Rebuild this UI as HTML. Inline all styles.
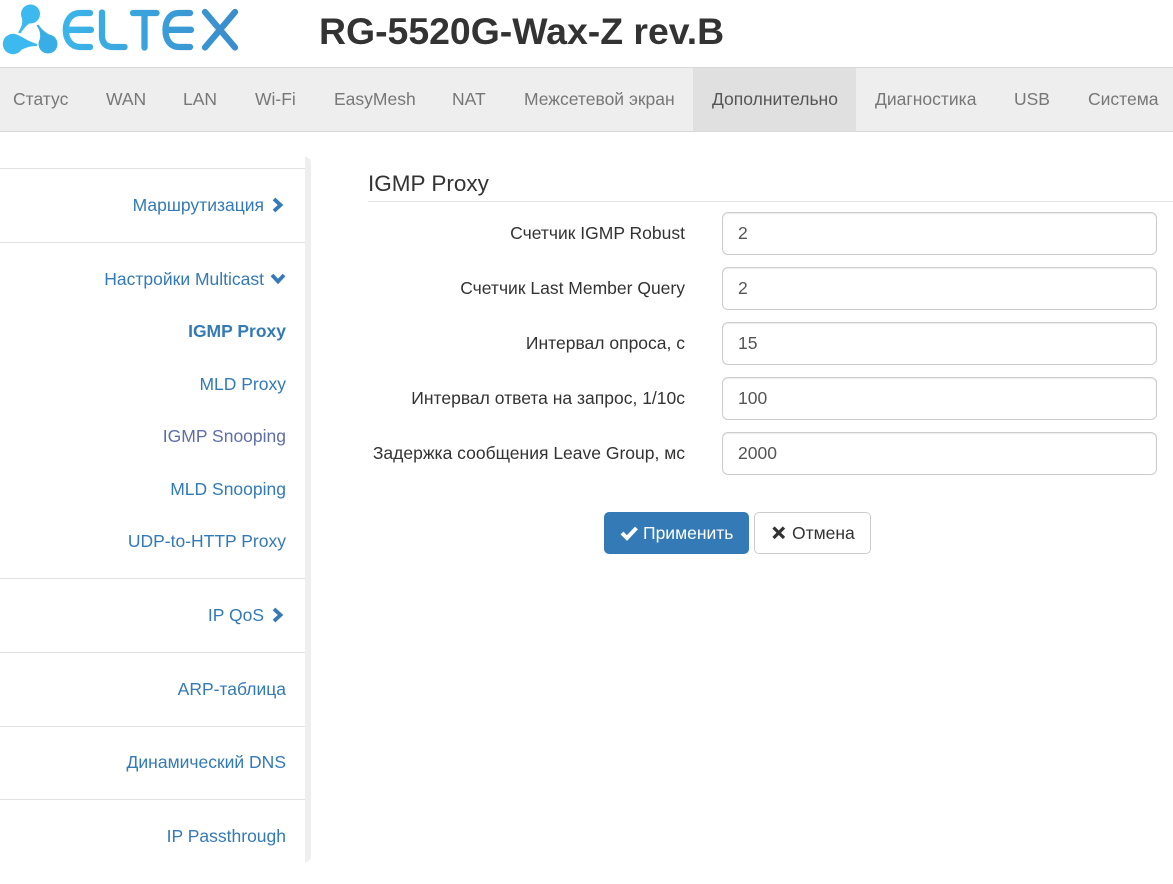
<!DOCTYPE html>
<html lang="ru"><head><meta charset="utf-8"><title>RG-5520G-Wax-Z rev.B</title>
<style>
html,body{margin:0;padding:0;background:#fff}
body{width:1173px;height:884px;position:relative;overflow:hidden;font-family:"Liberation Sans",sans-serif;font-size:17.5px;color:#333}
.a{position:absolute;white-space:nowrap;line-height:24px}
#nav{position:absolute;left:0;top:67px;width:1173px;height:63px;background:#eee;border-top:1px solid #d8d8d8;border-bottom:1px solid #d8d8d8}
#act{position:absolute;left:693px;top:0;width:163px;height:63px;background:#e0e0e0}
.n{top:87px;color:#777}
.s{color:#337ab7;right:887px}
.l{background:#e2e2e2;position:absolute;left:0;width:305px;height:1px}
.lb{right:488px;color:#333}
.in{position:absolute;left:722px;width:433px;height:41px;border:1px solid #ccc;border-radius:6px;box-shadow:inset 0 1px 1px rgba(0,0,0,.075);background:#fff;line-height:40px;text-indent:15px;color:#555}
</style></head><body>
<svg style="position:absolute;left:0;top:0" width="245" height="60" viewBox="0 0 245 60" role="img" aria-label="ELTEX">
<defs><linearGradient id="g" gradientUnits="userSpaceOnUse" x1="60" x2="240" y1="0" y2="0"><stop offset="0" stop-color="#3bb6ea"/><stop offset="1" stop-color="#3a8ccb"/></linearGradient></defs>
<g fill="#3cb9ee">
<circle cx="30.500" cy="14" r="9.500"/><path d="M22 18C23 24 21 28 18 32.500L20.500 33.500C24 28 27 25 30 23Z"/>
<circle cx="13" cy="44" r="10.200"/><path d="M16 34.500C22 36 27 41 37 44L37 46C28 46 22 49 15.500 53.500Z"/>
<circle cx="48" cy="44" r="9.500" fill="#39aee6"/><path d="M39.500 41C41 35 40 30 36.500 25.500L38.500 24.500C42 30 46 33 52 36Z" fill="#39aee6"/>
</g>
<g fill="none" stroke="url(#g)" stroke-width="6.300" stroke-linecap="round" stroke-linejoin="round">
<path d="M90 13H80C71 13 65.800 20.500 65.800 30S71 47 80 47H90M67 29.800H91"/>
<path d="M102 12.500V36C102 43 106 47 113 47H124.500"/>
<path d="M133 13H156.500M144.500 13V47.500"/>
<path d="M190 13H179C170 13 165.500 20.500 165.500 30S170 47 179 47H190M167 29.800H191"/>
<path d="M205 12L235 47.500M235 12L205 47.500"/>
</g></svg>
<div class="a" style="left:319px;top:10px;font-size:37.400px;font-weight:700;line-height:42px;color:#333">RG-5520G-Wax-Z rev.B</div>
<div id="nav"><div id="act"></div></div>
<div class="a n" style="left:13px">Статус</div>
<div class="a n" style="left:106px">WAN</div>
<div class="a n" style="left:183px">LAN</div>
<div class="a n" style="left:255px">Wi-Fi</div>
<div class="a n" style="left:334px">EasyMesh</div>
<div class="a n" style="left:452px">NAT</div>
<div class="a n" style="left:524px">Межсетевой экран</div>
<div class="a n" style="left:712px;color:#555">Дополнительно</div>
<div class="a n" style="left:875px">Диагностика</div>
<div class="a n" style="left:1014px">USB</div>
<div class="a n" style="left:1088px">Система</div>

<div style="position:absolute;left:305px;top:157px;width:6px;height:705px;background:#eee;border-radius:0 7px 7px 0"></div>
<div class="l" style="top:168px"></div><div class="l" style="top:242px"></div><div class="l" style="top:578px"></div><div class="l" style="top:652px"></div><div class="l" style="top:726px"></div><div class="l" style="top:799px"></div>

<div class="a s" style="top:193px;right:909px">Маршрутизация</div>
<svg style="position:absolute;left:271px;top:197px" width="13" height="16" viewBox="0 0 13 16"><path d="M3 2L9.500 8L3 14" fill="none" stroke="#337ab7" stroke-width="3.800"/></svg>
<div class="a s" style="top:267px;right:909px">Настройки Multicast</div>
<svg style="position:absolute;left:270px;top:272px" width="16" height="13" viewBox="0 0 16 13"><path d="M2 3L8 9.500L14 3" fill="none" stroke="#337ab7" stroke-width="3.800"/></svg>
<div class="a s" style="top:319px;font-weight:700">IGMP Proxy</div>
<div class="a s" style="top:372px">MLD Proxy</div>
<div class="a s" style="top:424px;color:#5f6ea8">IGMP Snooping</div>
<div class="a s" style="top:477px">MLD Snooping</div>
<div class="a s" style="top:529px">UDP-to-HTTP Proxy</div>
<div class="a s" style="top:603px;right:909px">IP QoS</div>
<svg style="position:absolute;left:271px;top:607px" width="13" height="16" viewBox="0 0 13 16"><path d="M3 2L9.500 8L3 14" fill="none" stroke="#337ab7" stroke-width="3.800"/></svg>
<div class="a s" style="top:677px">ARP-таблица</div>
<div class="a s" style="top:750px">Динамический DNS</div>
<div class="a s" style="top:824px">IP Passthrough</div>

<div class="a" style="left:368px;top:170px;font-size:22.500px;line-height:28px;color:#333">IGMP Proxy</div>
<div style="position:absolute;left:368px;top:201px;width:805px;height:1px;background:#e5e5e5"></div>

<div class="a lb" style="top:221px">Счетчик IGMP Robust</div><div class="in" style="top:212px">2</div>
<div class="a lb" style="top:276px">Счетчик Last Member Query</div><div class="in" style="top:267px">2</div>
<div class="a lb" style="top:331px">Интервал опроса, с</div><div class="in" style="top:322px">15</div>
<div class="a lb" style="top:386px">Интервал ответа на запрос, 1/10с</div><div class="in" style="top:377px">100</div>
<div class="a lb" style="top:441px">Задержка сообщения Leave Group, мс</div><div class="in" style="top:432px">2000</div>

<div style="position:absolute;left:604px;top:512px;width:145px;height:42px;background:#337ab7;border-radius:5px"></div>
<svg style="position:absolute;left:619px;top:524px" width="20" height="18" viewBox="0 0 20 18"><path d="M3 9L8 14L17.500 4" fill="none" stroke="#fff" stroke-width="4"/></svg>
<div class="a" style="left:643px;top:521px;color:#fff">Применить</div>
<div style="position:absolute;left:754px;top:512px;width:115px;height:40px;background:#fff;border:1px solid #ccc;border-radius:5px"></div>
<svg style="position:absolute;left:771px;top:525px" width="16" height="16" viewBox="0 0 16 16"><path d="M2.500 2.500L13 13M13 2.500L2.500 13" fill="none" stroke="#333" stroke-width="3.200"/></svg>
<div class="a" style="left:792px;top:521px;color:#333">Отмена</div>
</body></html>
